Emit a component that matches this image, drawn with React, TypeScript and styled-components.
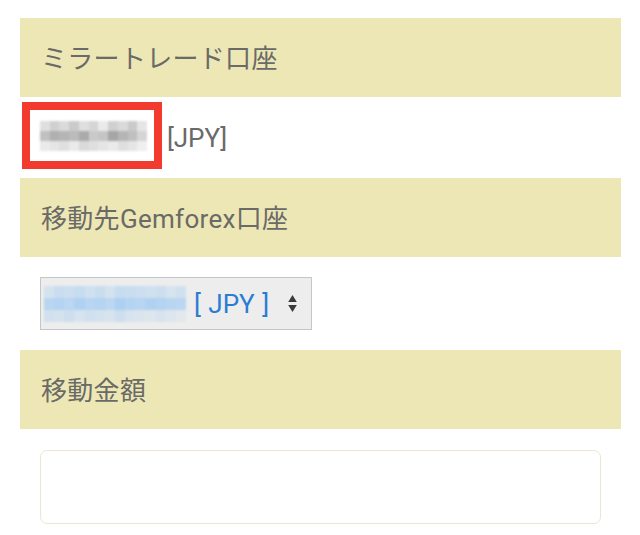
import React from "react";
import styled, { createGlobalStyle } from "styled-components";

const Global = createGlobalStyle`
  html, body { margin: 0; padding: 0; background: #ffffff; }
  body { font-family: Roboto, "Noto Sans CJK JP", sans-serif; }
`;

const Page = styled.div`
  width: 640px;
  height: 535px;
  box-sizing: border-box;
  padding: 18px 19px 0 20px;
  background: #fff;
  overflow: hidden;
`;

const Header = styled.div`
  height: 79px;
  display: flex;
  align-items: center;
  padding-left: 21px;
  padding-bottom: 3px;
  box-sizing: border-box;
  background: #ede7b6;
  color: #6a6a66;
  font-size: 26px;
  letter-spacing: 0.3px;
`;

const Row = styled.div<{ $h: number; $pl: number }>`
  height: ${(p) => p.$h}px;
  display: flex;
  align-items: center;
  padding-left: ${(p) => p.$pl}px;
`;

const Highlight = styled.div`
  width: 114px;
  height: 51px;
  border: 8px solid #f23a2f;
  background: #fff;
  display: flex;
  align-items: center;
  padding-left: 10px;
  box-sizing: content-box;
  margin-top: -4px;
`;

const Currency = styled.span`
  margin-left: 5px;
  font-size: 26px;
  color: #6a6a6a;
`;

const Mosaic = styled.div<{ $cols: number }>`
  display: grid;
  grid-template-columns: repeat(${(p) => p.$cols}, 1fr);
  grid-auto-rows: 10px;
  filter: blur(1.2px);
`;

const Select = styled.div`
  width: 267px;
  height: 51px;
  border: 1px solid #c6c6c6;
  background: #ededed;
  display: flex;
  align-items: center;
  padding-left: 3px;
  box-sizing: content-box;
`;

const SelectValue = styled.span`
  margin-left: 8px;
  font-size: 26px;
  color: #2b7dd2;
  white-space: pre;
  word-spacing: 1px;
`;

const Arrows = styled.svg`
  margin-left: 19px;
`;

const Input = styled.div`
  margin-left: 20px;
  margin-top: 21px;
  width: 559px;
  height: 72px;
  border: 1px solid #ede6d2;
  border-radius: 7px;
  background: #fff;
`;

const grayVals = [
  [0.3, 0.45, 0.35, 0.5, 0.3, 0.4, 0.2, 0.45, 0.35, 0.5, 0.25],
  [0.6, 0.75, 0.7, 0.65, 0.8, 0.5, 0.55, 0.85, 0.7, 0.6, 0.4],
  [0.2, 0.25, 0.3, 0.2, 0.35, 0.3, 0.25, 0.2, 0.3, 0.25, 0.15],
];

const blueVals = [
  [0.35, 0.5, 0.45, 0.55, 0.4, 0.5, 0.35, 0.55, 0.5, 0.45, 0.4, 0.45, 0.3, 0.4],
  [0.75, 0.8, 0.7, 0.85, 0.75, 0.8, 0.7, 0.9, 0.8, 0.75, 0.85, 0.8, 0.75, 0.7],
  [0.4, 0.35, 0.45, 0.3, 0.4, 0.35, 0.3, 0.45, 0.3, 0.25, 0.2, 0.3, 0.2, 0.15],
];

function Blur({ vals, rgb, width, rowH }: { vals: number[][]; rgb: string; width: number; rowH: number }) {
  const cols = vals[0].length;
  return (
    <Mosaic $cols={cols} style={{ width, gridAutoRows: `${rowH}px` }}>
      {vals.flatMap((row, r) =>
        row.map((a, c) => (
          <div key={`${r}-${c}`} style={{ background: `rgba(${rgb},${a})` }} />
        ))
      )}
    </Mosaic>
  );
}

export default function App() {
  return (
    <>
      <Global />
      <Page>
        <Header>ミラートレード口座</Header>
        <Row $h={81} $pl={2}>
          <Highlight>
            <Blur vals={grayVals} rgb="150,150,150" width={107} rowH={10} />
          </Highlight>
          <Currency>[JPY]</Currency>
        </Row>
        <Header>移動先Gemforex口座</Header>
        <Row $h={93} $pl={20}>
          <Select>
            <Blur vals={blueVals} rgb="165,205,242" width={142} rowH={12} />
            <SelectValue>[ JPY ]</SelectValue>
            <Arrows width="9" height="19" viewBox="0 0 9 19">
              <path d="M4.5 1 L8.8 8 L0.2 8 Z" fill="#3a3a3a" />
              <path d="M4.5 18 L8.8 11 L0.2 11 Z" fill="#3a3a3a" />
            </Arrows>
          </Select>
        </Row>
        <Header>移動金額</Header>
        <Input />
      </Page>
    </>
  );
}
